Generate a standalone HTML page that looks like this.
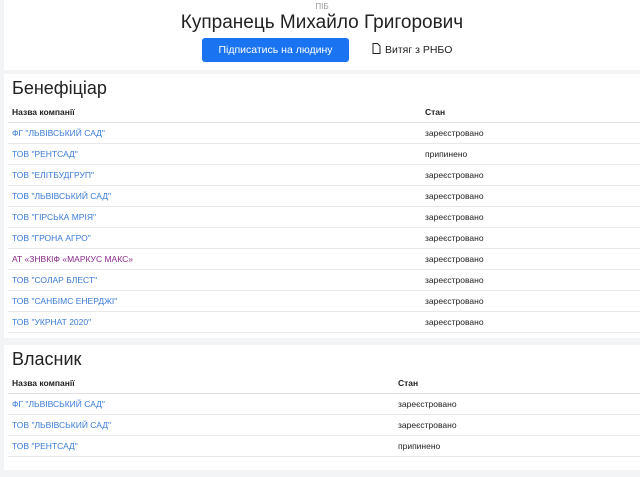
<!DOCTYPE html>
<html><head><meta charset="utf-8"><style>
body{margin:0;background:#f3f4f6;font-family:"Liberation Sans",sans-serif;width:640px;height:477px;overflow:hidden}
.card{background:#fff;position:absolute;left:4px;right:0}
.h{top:0;height:70px;text-align:center}
.pib{font-size:8px;color:#999;position:absolute;top:2px;left:0;right:0}
.name{font-size:19px;color:#222;position:absolute;top:12px;left:0;right:0}
.btn{position:absolute;left:198px;top:38px;width:147px;height:24px;background:#1a73f0;color:#fff;border-radius:3px;font-size:10.5px;line-height:24px}
.rnbo{position:absolute;left:368px;top:38px;line-height:24px;font-size:10.5px;color:#222}
h2{font-weight:normal;font-size:18px;margin:0;position:absolute;left:8px;color:#222}
table{position:absolute;left:4px;width:632px;border-collapse:collapse;font-size:8.5px}
td{height:20px;border-bottom:1px solid #e8e8e8;padding:0 0 0 4px;color:#222}
th{height:21px;text-align:left;padding:0 0 0 4px;font-weight:bold;border-bottom:1px solid #e0e0e0;color:#222}
a{color:#3a7bd5;text-decoration:none}
</style></head><body>
<div class="card h"><div class="pib">ПІБ</div><div class="name">Купранець Михайло Григорович</div>
<div class="btn">Підписатись на людину</div>
<div class="rnbo"><svg width="9" height="11" viewBox="0 0 9 11" style="vertical-align:-1px;margin-right:4px"><path d="M1 .5h4.5l2.5 2.5v7.5h-7z" fill="none" stroke="#222"/></svg>Витяг з РНБО</div></div>
<div class="card" style="top:74px;height:264px">
<h2 style="top:4px">Бенефіціар</h2>
<table style="top:27px"><tr><th style="width:409px">Назва компанії</th><th>Стан</th></tr>
<tr><td><a>ФГ "ЛЬВІВСЬКИЙ САД"</a></td><td>зареєстровано</td></tr>
<tr><td><a>ТОВ "РЕНТСАД"</a></td><td>припинено</td></tr>
<tr><td><a>ТОВ "ЕЛІТБУДГРУП"</a></td><td>зареєстровано</td></tr>
<tr><td><a>ТОВ "ЛЬВІВСЬКИЙ САД"</a></td><td>зареєстровано</td></tr>
<tr><td><a>ТОВ "ГІРСЬКА МРІЯ"</a></td><td>зареєстровано</td></tr>
<tr><td><a>ТОВ "ГРОНА АГРО"</a></td><td>зареєстровано</td></tr>
<tr><td><a style="color:#8a2a8a">АТ «ЗНВКІФ «МАРКУС МАКС»</a></td><td>зареєстровано</td></tr>
<tr><td><a>ТОВ "СОЛАР БЛЕСТ"</a></td><td>зареєстровано</td></tr>
<tr><td><a>ТОВ "САНБІМС ЕНЕРДЖІ"</a></td><td>зареєстровано</td></tr>
<tr><td><a>ТОВ "УКРНАТ 2020"</a></td><td>зареєстровано</td></tr>
</table></div>
<div class="card" style="top:345px;height:125px">
<h2 style="top:4px">Власник</h2>
<table style="top:27px"><tr><th style="width:382px">Назва компанії</th><th>Стан</th></tr>
<tr><td><a>ФГ "ЛЬВІВСЬКИЙ САД"</a></td><td>зареєстровано</td></tr>
<tr><td><a>ТОВ "ЛЬВІВСЬКИЙ САД"</a></td><td>зареєстровано</td></tr>
<tr><td><a>ТОВ "РЕНТСАД"</a></td><td>припинено</td></tr>
</table></div>
</body></html>
